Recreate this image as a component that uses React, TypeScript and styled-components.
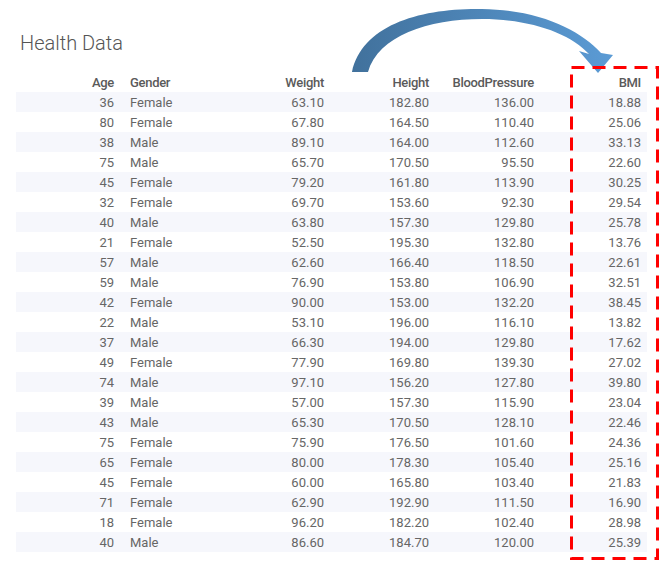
import styled, { createGlobalStyle } from 'styled-components';

const rows: [number, string, string, string, string, string][] = [
    [36, 'Female', '63.10', '182.80', '136.00', '18.88'],
    [80, 'Female', '67.80', '164.50', '110.40', '25.06'],
    [38, 'Male', '89.10', '164.00', '112.60', '33.13'],
    [75, 'Male', '65.70', '170.50', '95.50', '22.60'],
    [45, 'Female', '79.20', '161.80', '113.90', '30.25'],
    [32, 'Female', '69.70', '153.60', '92.30', '29.54'],
    [40, 'Male', '63.80', '157.30', '129.80', '25.78'],
    [21, 'Female', '52.50', '195.30', '132.80', '13.76'],
    [57, 'Male', '62.60', '166.40', '118.50', '22.61'],
    [59, 'Male', '76.90', '153.80', '106.90', '32.51'],
    [42, 'Female', '90.00', '153.00', '132.20', '38.45'],
    [22, 'Male', '53.10', '196.00', '116.10', '13.82'],
    [37, 'Male', '66.30', '194.00', '129.80', '17.62'],
    [49, 'Female', '77.90', '169.80', '139.30', '27.02'],
    [74, 'Male', '97.10', '156.20', '127.80', '39.80'],
    [39, 'Male', '57.00', '157.30', '115.90', '23.04'],
    [43, 'Male', '65.30', '170.50', '128.10', '22.46'],
    [75, 'Female', '75.90', '176.50', '101.60', '24.36'],
    [65, 'Female', '80.00', '178.30', '105.40', '25.16'],
    [45, 'Female', '60.00', '165.80', '103.40', '21.83'],
    [71, 'Female', '62.90', '192.90', '111.50', '16.90'],
    [18, 'Female', '96.20', '182.20', '102.40', '28.98'],
    [40, 'Male', '86.60', '184.70', '120.00', '25.39'],
];

const headers = ['Age', 'Gender', 'Weight', 'Height', 'BloodPressure', 'BMI'];

const App = () => {
    return (
        <>
            <GlobalStyle />
            <Page>
                <Title>Health Data</Title>
                <Table>
                    <Row>
                        {headers.map((h, i) => (
                            <HeadCell key={h} $left={i === 1}>
                                {h}
                            </HeadCell>
                        ))}
                    </Row>
                    {rows.map((r, idx) => (
                        <Row key={idx} $striped={idx % 2 === 0}>
                            {r.map((v, i) => (
                                <Cell key={i} $left={i === 1}>
                                    {v}
                                </Cell>
                            ))}
                        </Row>
                    ))}
                </Table>

                {/* 강조 화살표와 BMI 점선 박스 */}
                <Overlay width="667" height="571" viewBox="0 0 667 571">
                    <defs>
                        <linearGradient id="arrowFill" x1="0" y1="0" x2="1" y2="0">
                            <stop offset="0" stopColor="#41719c" />
                            <stop offset="1" stopColor="#5b9bd5" />
                        </linearGradient>
                    </defs>
                    <path
                        d="M 352 72 C 362 25, 420 8, 482 9 C 540 10, 580 30, 601 53 L 613 55 L 598 73 L 579 51 L 589 54 C 570 33, 530 19, 482 19 C 428 19, 378 36, 368 72 Z"
                        fill="url(#arrowFill)"
                    />
                    <rect x="571.5" y="67.5" width="86" height="491" fill="none" stroke="#ff0000" strokeWidth="3" strokeDasharray="13 8" />
                </Overlay>
            </Page>
        </>
    );
};

const GlobalStyle = createGlobalStyle`
    body {
        margin: 0;
        background: #ffffff;
        font-family: Roboto, 'Liberation Sans', sans-serif;
    }
`;

// 전체 페이지
const Page = styled.div`
    position: relative;
    width: 667px;
    height: 571px;
    padding: 31px 0 0 16px;
    box-sizing: border-box;
`;

const Title = styled.div`
    font-size: 20px;
    font-weight: 300;
    line-height: 24px;
    color: #555555;
    padding-left: 4px;
    margin-bottom: 17px;
`;

const Table = styled.div`
    width: 631px;
    display: flex;
    flex-direction: column;
`;

const Row = styled.div<{ $striped?: boolean }>`
    display: grid;
    grid-template-columns: 104px 110px 100px 105px 105px 107px;
    height: 20px;
    align-items: center;
    background: ${(p) => (p.$striped ? '#f6f7fc' : 'transparent')};
`;

const Cell = styled.div<{ $left?: boolean }>`
    font-size: 13px;
    color: #666666;
    text-align: ${(p) => (p.$left ? 'left' : 'right')};
    padding: ${(p) => (p.$left ? '0 0 0 10px' : '0 6px 0 0')};
    white-space: nowrap;
`;

const HeadCell = styled(Cell)`
    font-weight: 500;
    color: #5a5a5a;
    letter-spacing: -0.3px;
`;

const Overlay = styled.svg`
    position: absolute;
    left: 0;
    top: 0;
    pointer-events: none;
`;

export default App;
